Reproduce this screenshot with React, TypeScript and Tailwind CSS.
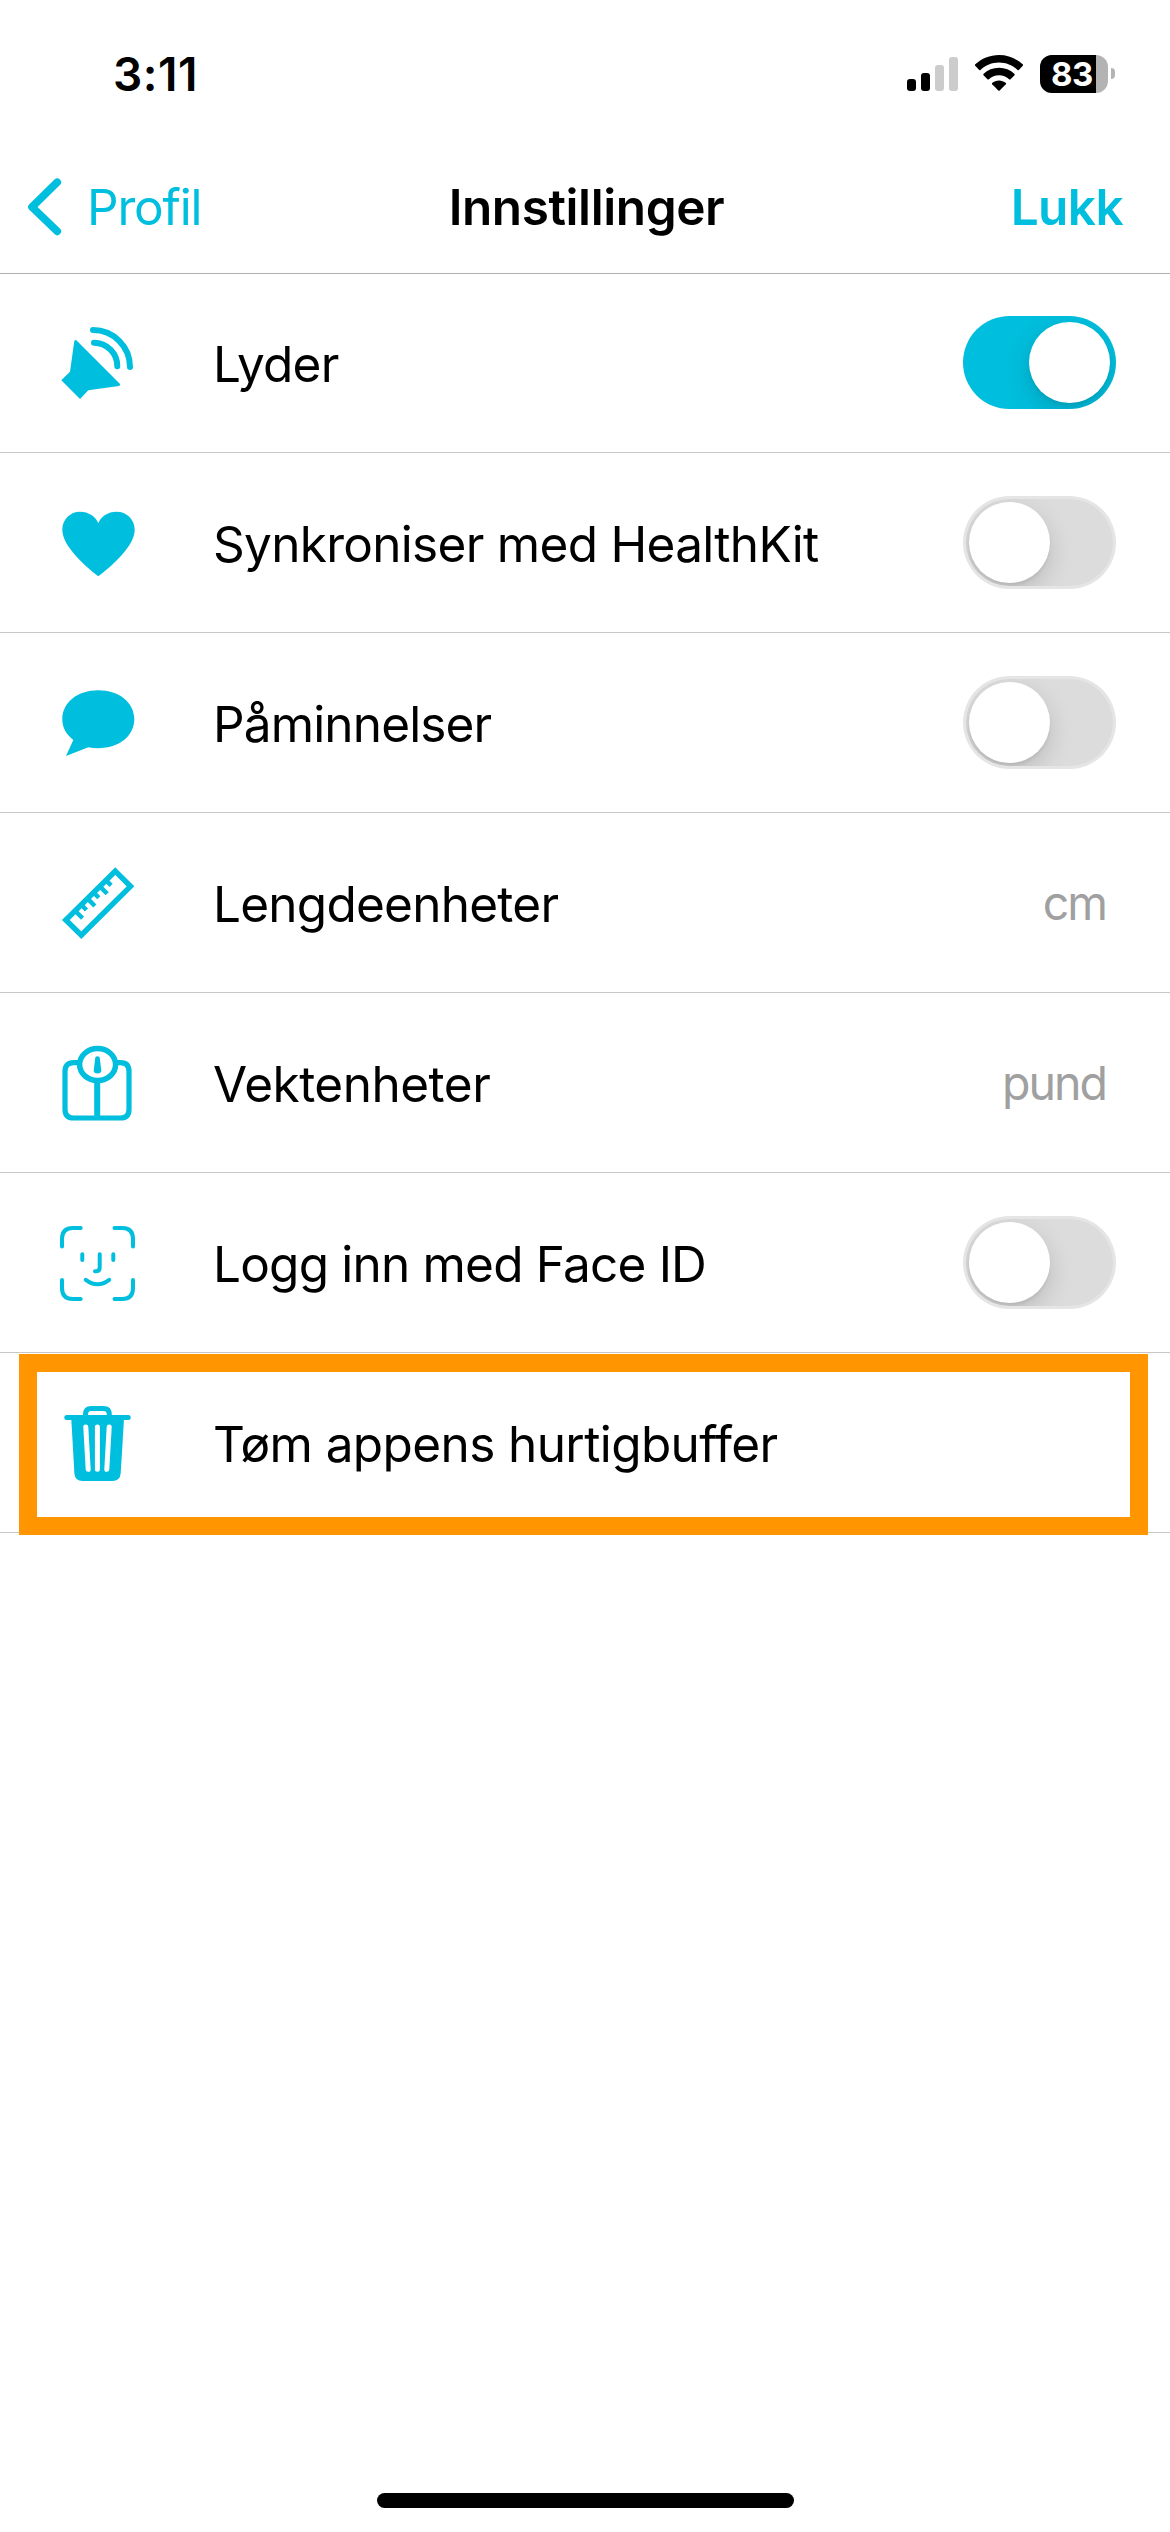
import type { ReactNode } from 'react';

interface SettingsRowProps {
  icon: ReactNode;
  label: string;
  labelClass?: string;
  children?: ReactNode;
}

function Icon({ children }: { children: ReactNode }) {
  return (
    <svg viewBox="0 0 99 99" className="w-[99px] h-[99px] shrink-0 text-[#00bedd]" fill="currentColor">
      {children}
    </svg>
  );
}

function SoundIcon() {
  return (
    <Icon>
      <path d="M26.3 28 Q27.2 26.2 28.6 27.6 L71.8 70.8 Q72.8 72.2 71 72.9 L40.3 77.3 L32 86 L13.3 67.3 L22 58.7 Z" />
      <g fill="none" stroke="currentColor" strokeWidth="6" strokeLinecap="round">
        <path d="M45 17 A37 37 0 0 1 82 54" />
        <path d="M46 29.7 A23.4 23.4 0 0 1 69.3 53.2" />
      </g>
    </Icon>
  );
}

function HeartIcon() {
  return (
    <Icon>
      <path d="M50.3 83.3 C37 73 14.3 53 14.3 36.8 C14.3 26 22.5 18.7 32 18.7 C40.5 18.7 48 23.5 50.3 30.3 C52.6 23.5 60 18.7 68.6 18.7 C78.5 18.7 86.7 26 86.7 36.8 C86.7 53 64 73 50.3 83.3 Z" />
    </Icon>
  );
}

function BubbleIcon() {
  return (
    <Icon>
      <path d="M50.3 17.3 C71 17.3 86.3 29.5 86.3 46.3 C86.3 63 71 75.2 50.3 75.2 C46.8 75.2 43.4 74.8 40.3 74.2 L18 83 L25.3 67 C18.3 61.6 14.3 54.5 14.3 46.3 C14.3 29.5 29.6 17.3 50.3 17.3 Z" />
    </Icon>
  );
}

function RulerIcon() {
  return (
    <Icon>
      <g fill="none" stroke="currentColor">
        <path strokeWidth="5.4" d="M67.3 18.1 L82.5 33.3 L33.3 82.2 L17.8 67 Z" />
        <path strokeWidth="4.4" d="M27 57.7 L34.6 65.3 M39.3 45.4 L46.9 53 M51.6 33.1 L59.2 40.7" />
        <path strokeWidth="4.4" d="M33 51.5 L38.5 57 M45.3 39.2 L50.8 44.7 M57.6 26.9 L63.1 32.4" />
      </g>
    </Icon>
  );
}

function ScaleIcon() {
  return (
    <Icon>
      <g fill="none" stroke="currentColor" strokeWidth="5.2">
        <path d="M31 29.7 H25.5 Q17 29.7 17 38.5 V76.5 Q17 85 25.5 85 H72.5 Q81 85 81 76.5 V38.5 Q81 29.7 72.5 29.7 H67" />
        <ellipse cx="49.6" cy="31.6" rx="18" ry="16" strokeWidth="5.5" />
        <path strokeWidth="6" d="M49.2 49 V85" />
      </g>
      <path d="M47.3 24.6 Q49.5 22 51.7 24.6 L53.3 37.5 Q53.3 40.5 49.5 40.5 Q45.7 40.5 45.7 37.5 Z" />
    </Icon>
  );
}

function FaceIdIcon() {
  return (
    <Icon>
      <g fill="none" stroke="currentColor" strokeWidth="4" strokeLinecap="round">
        <path d="M14 33.5 V26 Q14 15 25 15 H32.7" />
        <path d="M66.5 15 H74 Q85 15 85 26 V33.5" />
        <path d="M85 67 V75 Q85 86 74 86 H66.5" />
        <path d="M32.7 86 H25 Q14 86 14 75 V67" />
        <path d="M34.3 41.3 V47 M65.3 41.3 V47" />
        <path d="M51.7 41.3 V54.5 Q51.7 58.3 48 58.3 H47" />
        <path d="M37.8 66.8 Q49.5 75.6 61.2 66.8" />
      </g>
    </Icon>
  );
}

function TrashIcon() {
  return (
    <Icon>
      <path d="M23.3 26 H76 L72.7 80.3 Q72 88 64.5 88 H34.5 Q27 88 26.4 80.3 Z" />
      <g fill="none" stroke="currentColor" strokeWidth="5" strokeLinecap="round">
        <path d="M18.8 24.6 H80.2" />
        <path d="M37.5 24.6 V21.3 Q37.5 15.4 43.4 15.4 H55.4 Q61.3 15.4 61.3 21.3 V24.6" />
      </g>
      <path
        fill="none"
        stroke="#fff"
        strokeWidth="5"
        strokeLinecap="round"
        d="M37.8 34 L40.2 76.3 M49.4 34 V76.3 M61.2 34 L58.8 76.3"
      />
    </Icon>
  );
}

function Toggle({ on = false }: { on?: boolean }) {
  if (on) {
    return (
      <div className="flex justify-end w-[153px] h-[93px] p-1.5 rounded-full bg-[#00bedd] overflow-hidden">
        <div className="w-[81px] h-[81px] rounded-full bg-white shadow-[0_9px_24px_rgba(0,0,0,0.15),0_3px_3px_rgba(0,0,0,0.06)]" />
      </div>
    );
  }
  return (
    <div className="w-[153px] h-[93px] p-[3px] rounded-full bg-[#e5e5e5]">
      <div className="w-full h-full p-[3px] rounded-full bg-[#dcdcdc] overflow-hidden">
        <div className="w-[81px] h-[81px] rounded-full bg-white shadow-[0_9px_24px_rgba(0,0,0,0.15),0_3px_3px_rgba(0,0,0,0.06)]" />
      </div>
    </div>
  );
}

function SettingsRow({ icon, label, labelClass = 'tracking-[-0.75px]', children }: SettingsRowProps) {
  return (
    <div className="relative flex items-center h-[180px] pl-12 pr-[54px] border-b border-[#c8c8c8]">
      {icon}
      <span className={`ml-[66px] pt-[3px] text-[49.5px] leading-[60px] whitespace-nowrap ${labelClass}`}>{label}</span>
      <div className="ml-auto">{children}</div>
    </div>
  );
}

function UnitValue({ children }: { children: ReactNode }) {
  return (
    <div className="mr-[10px] pt-px text-[46.5px] leading-[58px] tracking-[-2px] text-[#a0a0a0]">{children}</div>
  );
}

function StatusBar() {
  return (
    <div className="flex justify-between h-[148px] pl-[113px] pr-[55px]">
      <span className="pt-[46px] text-[46px] leading-[56px] tracking-[0.5px] font-semibold">3:11</span>
      <div className="flex items-start pt-[55px]">
        {/* Signal strength */}
        <div className="flex items-end gap-[5px] h-9">
          <div className="w-[9px] h-3 rounded-[3px] bg-black" />
          <div className="w-[9px] h-[18px] rounded-[3px] bg-black" />
          <div className="w-[9px] h-[26px] rounded-[3px] bg-[#ccc]" />
          <div className="w-[9px] h-[34px] rounded-[3px] bg-[#ccc]" />
        </div>
        {/* Wifi */}
        <svg viewBox="0 0 48 36" className="w-12 h-9 ml-[17px]">
          <path d="M24 0 C33 0 41.5 3.4 48 9.6 Q48.3 10.2 47.8 10.8 L43.8 15 Q43.2 15.3 42.6 14.9 C37.5 10.2 31 7.5 24 7.5 C17 7.5 10.5 10.2 5.4 14.9 Q4.8 15.3 4.2 15 L0.2 10.8 Q-0.3 10.2 0 9.6 C6.5 3.4 15 0 24 0 Z" />
          <path d="M24 12.8 C29.9 12.8 35.4 15 39.6 19 Q39.9 19.6 39.5 20.2 L35.3 24.4 Q34.7 24.7 34.1 24.3 C31.3 21.8 27.8 20.3 24 20.3 C20.2 20.3 16.7 21.8 13.9 24.3 Q13.3 24.7 12.7 24.4 L8.5 20.2 Q8.1 19.6 8.4 19 C12.6 15 18.1 12.8 24 12.8 Z" />
          <path d="M24 25.4 C26.6 25.4 29 26.3 30.9 28.1 Q31.3 28.7 30.8 29.3 L24.7 35.5 Q24 36 23.3 35.5 L17.2 29.3 Q16.7 28.7 17.1 28.1 C19 26.3 21.4 25.4 24 25.4 Z" />
        </svg>
        {/* Battery */}
        <div className="flex w-[68px] h-[38px] ml-[17px] rounded-[12px] bg-[#b3b3b3] overflow-hidden">
          <div className="w-14 bg-black pl-[11px] text-white text-[33px] leading-[38px] tracking-[-0.5px] font-bold">83</div>
        </div>
        <div className="w-1 h-[11px] ml-[3px] mt-[13px] rounded-r-full bg-[#b3b3b3]" />
      </div>
    </div>
  );
}

function Header() {
  return (
    <header className="relative z-10 h-[273px] shadow-[0_1px_0_#b0b0b0]">
      <StatusBar />
      <div className="grid grid-cols-3 items-center h-[118px] pl-[27px] pr-[47px] text-[49.5px] leading-[60px] text-[#00bedd]">
        <div className="flex items-center">
          <svg
            viewBox="0 0 36 60"
            className="w-9 h-[60px]"
            fill="none"
            stroke="currentColor"
            strokeWidth="7.8"
            strokeLinecap="round"
            strokeLinejoin="round"
          >
            <path d="M30.2 5.3 L5 30 L30.2 54.3" />
          </svg>
          <span className="ml-6 tracking-[-1.2px]">Profil</span>
        </div>
        <h1 className="pl-[23px] text-center font-semibold tracking-[-0.4px] text-black">Innstillinger</h1>
        <span className="text-right font-semibold tracking-[-0.6px]">Lukk</span>
      </div>
    </header>
  );
}

export default function App() {
  return (
    <div className="flex flex-col w-[1170px] h-[2532px] bg-white text-black font-['Inter',sans-serif] overflow-hidden">
      <Header />

      <main className="flex-1">
        <SettingsRow icon={<SoundIcon />} label="Lyder">
          <Toggle on />
        </SettingsRow>
        <SettingsRow icon={<HeartIcon />} label="Synkroniser med HealthKit" labelClass="tracking-[-0.7px]">
          <Toggle />
        </SettingsRow>
        <SettingsRow icon={<BubbleIcon />} label="Påminnelser" labelClass="tracking-[-0.85px]">
          <Toggle />
        </SettingsRow>
        <SettingsRow icon={<RulerIcon />} label="Lengdeenheter">
          <UnitValue>cm</UnitValue>
        </SettingsRow>
        <SettingsRow icon={<ScaleIcon />} label="Vektenheter" labelClass="tracking-[-0.5px]">
          <UnitValue>pund</UnitValue>
        </SettingsRow>
        <SettingsRow icon={<FaceIdIcon />} label="Logg inn med Face ID" labelClass="tracking-[-0.8px]">
          <Toggle />
        </SettingsRow>
        <SettingsRow icon={<TrashIcon />} label="Tøm appens hurtigbuffer" labelClass="tracking-[-0.6px]">
          {/* Highlight frame around the row */}
          <div className="absolute top-px left-[19px] w-[1129px] h-[181px] border-[18px] border-[#ff9500]" />
        </SettingsRow>
      </main>

      {/* Home indicator */}
      <div className="w-[417px] h-[15px] ml-[377px] mb-6 rounded-full bg-black" />
    </div>
  );
}
